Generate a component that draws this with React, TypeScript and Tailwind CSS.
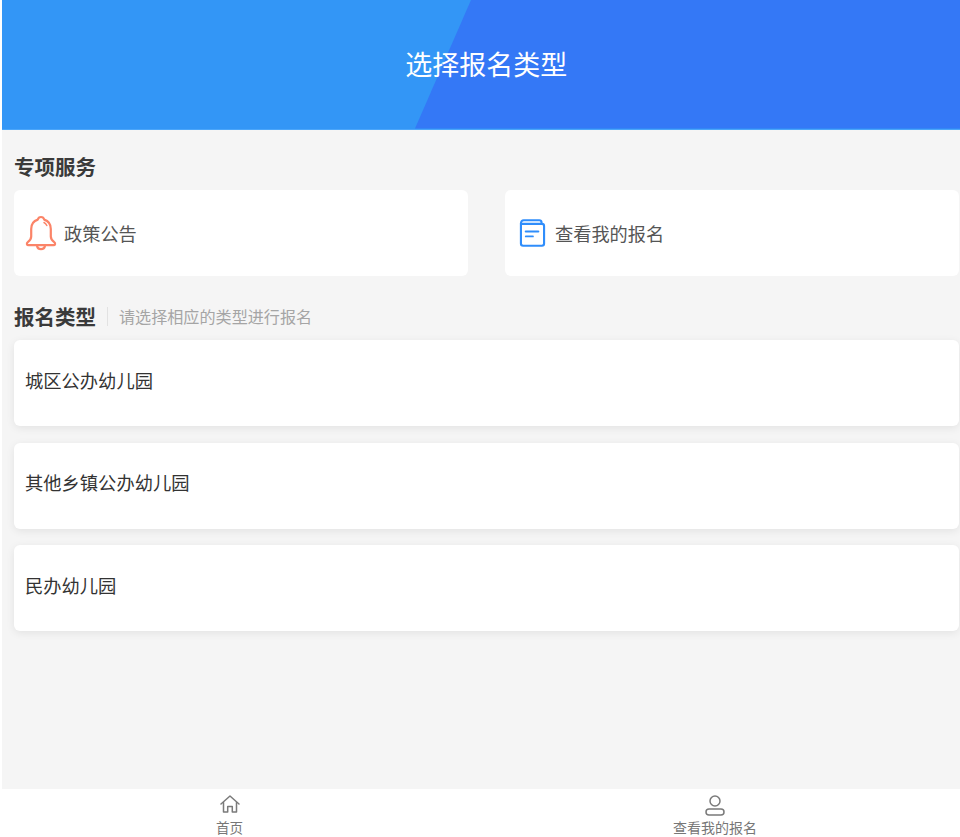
const font = "font-['Noto_Sans_CJK_SC','Noto_Sans',sans-serif]";

const types = ['城区公办幼儿园', '其他乡镇公办幼儿园', '民办幼儿园'];

const BellIcon = () => (
  <svg width="32" height="36" viewBox="0 0 32 36" fill="none" stroke="#fb8468" strokeWidth="2.200" strokeLinejoin="round" strokeLinecap="round">
    <path d="M16 2c-1.800 0-2.800 1-3.200 2.600C8.400 6 6.200 9.600 6.200 14v7.500c0 2.500-1.200 4-3.400 5.600-1.600 1.200-1 3.100.8 3.100h24.800c1.800 0 2.400-1.900.8-3.100-2.200-1.600-3.400-3.100-3.400-5.600V14c0-4.400-2.200-8-6.600-9.400C18.800 3 17.800 2 16 2z" />
    <path d="M12 30.500c.3 2.300 2 3.700 4 3.700s3.700-1.400 4-3.700" />
    <path d="M19 7.500c1.300.7 2.200 1.700 2.800 3" strokeWidth="1.500" />
  </svg>
);

const BookIcon = () => (
  <svg width="27" height="30" viewBox="0 0 28 30" fill="none" stroke="#2f8dfb" strokeWidth="2.200" strokeLinejoin="round" strokeLinecap="round">
    <path d="M2 5.500V26c0 1.300.9 2.200 2.200 2.200h19.600c1.300 0 2.200-.9 2.200-2.200V7.700c0-1.300-.9-2.200-2.200-2.200H2z" />
    <path d="M2 5.500C2 3 3 1.800 5 1.800h16c1.500 0 2.300.9 2.400 2.400" />
    <path d="M7 13.500h13" />
    <path d="M7 18.500h7.500" strokeWidth="1.800" />
  </svg>
);

const HomeIcon = () => (
  <svg width="20" height="18" viewBox="0 0 20 18" fill="none" stroke="#7a7a7a" strokeWidth="1.500" strokeLinejoin="round" strokeLinecap="round">
    <path d="M1 9 10 1l9 8" />
    <path d="M3.500 7.500V17h4.200v-5.500h4.600V17h4.200V7.500" />
  </svg>
);

const UserIcon = () => (
  <svg width="22" height="21" viewBox="0 0 22 21" fill="none" stroke="#7a7a7a" strokeWidth="1.500">
    <circle cx="11" cy="6" r="5" />
    <rect x="2" y="14" width="18" height="6" rx="3" />
  </svg>
);

const SectionTitle = ({ children }: { children: string }) => (
  <h2 className="text-[20.500px] leading-[28px] font-bold text-[#3a3a3a]">{children}</h2>
);

export default function App() {
  return (
    <div className={`${font} w-[960px] h-[837px] bg-white flex flex-col overflow-hidden`}>
      <div className="flex-1 flex flex-col ml-[1.500px] bg-[#f5f5f5]">
        <header className="relative h-[129.500px] shrink-0 bg-[#3396f6] border-b border-[#4ba6fa] flex items-center justify-center">
          <div className="absolute inset-0 bg-[#3478f6] [clip-path:polygon(469.500px_0,100%_0,100%_100%,413.500px_100%)]" />
          <h1 className="relative text-[27px] leading-[38px] text-white ml-[11px] mb-[1px]">选择报名类型</h1>
        </header>

        <main className="pl-[12.500px] pt-[22.500px]">
          <SectionTitle>专项服务</SectionTitle>
          <div className="flex gap-[37px] mt-[10px]">
            <div className="w-[454px] h-[86px] bg-white rounded-[6px] flex items-center pl-[11px] gap-[7px]">
              <BellIcon />
              <span className="text-[18.200px] text-[#555555] pt-[1px]">政策公告</span>
            </div>
            <div className="w-[454px] h-[86px] bg-white rounded-[6px] flex items-center pl-[14px] gap-[9px]">
              <BookIcon />
              <span className="text-[18.200px] text-[#555555] pt-[1px]">查看我的报名</span>
            </div>
          </div>

          <div className="flex items-center mt-[26px]">
            <SectionTitle>报名类型</SectionTitle>
            <span className="w-px h-[19px] bg-[#e2e2e2] ml-[11px] mr-[11px]" />
            <span className="text-[16.100px] text-[#a5a5a5]">请选择相应的类型进行报名</span>
          </div>

          <div className="flex flex-col gap-[16.500px] mt-[10px]">
            {types.map((t) => (
              <div
                key={t}
                className="w-[945px] h-[86px] bg-white rounded-[6px] shadow-[0_2px_8px_rgba(0,0,0,0.08)] flex items-center pl-[11px] pb-[5px] text-[18.300px] text-[#333333]"
              >
                {t}
              </div>
            ))}
          </div>
        </main>
      </div>

      <nav className="h-[48.500px] shrink-0 bg-white flex justify-between">
        <div className="w-[459px] flex flex-col items-center pt-[6.500px]">
          <HomeIcon />
          <span className="text-[13.500px] leading-[18px] mt-[5px] text-[#777777]">首页</span>
        </div>
        <div className="w-[490px] flex flex-col items-center pt-[6.500px]">
          <UserIcon />
          <span className="text-[14px] leading-[18px] mt-[2px] text-[#777777]">查看我的报名</span>
        </div>
      </nav>
    </div>
  );
}
